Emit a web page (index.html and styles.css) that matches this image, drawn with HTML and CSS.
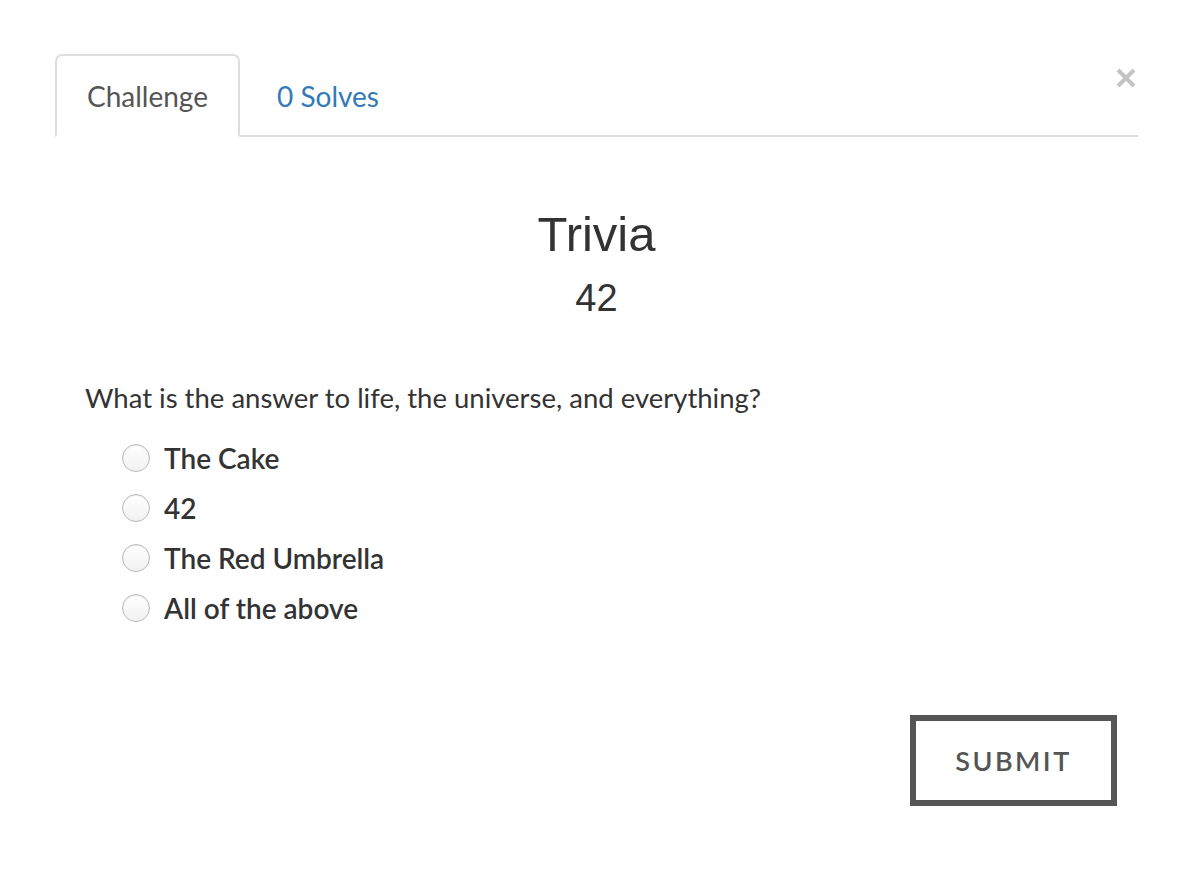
FILE: index.html
```html
<!DOCTYPE html>
<html lang="en">

<head>
    <meta charset="UTF-8">
    <meta name="viewport" content="width=device-width, initial-scale=1.0">
    <title>Trivia</title>
    <link rel="stylesheet" href="styles.css">
</head>

<body>
    <div class="modal">
        <div class="tab-bar">
            <ul class="tabs">
                <li class="tab active">Challenge</li>
                <li class="tab"><a href="#">0 Solves</a></li>
            </ul>
            <button class="close" aria-label="Close">
                <svg width="22" height="22" viewBox="0 0 22 22">
                    <path d="M2 3 L18 19 M18 3 L2 19" stroke="#c4c4c4" stroke-width="4" stroke-linecap="butt" />
                </svg>
            </button>
        </div>

        <div class="challenge">
            <h2 class="chal-name">Trivia</h2>
            <h3 class="chal-value">42</h3>

            <div class="chal-body">
                <p class="question">What is the answer to life, the universe, and everything?</p>

                <form class="answers">
                    <label class="option"><input type="radio" name="answer"> The Cake</label>
                    <label class="option"><input type="radio" name="answer"> 42</label>
                    <label class="option"><input type="radio" name="answer"> The Red Umbrella</label>
                    <label class="option"><input type="radio" name="answer"> All of the above</label>
                </form>

                <div class="actions">
                    <button class="submit-btn" type="button">Submit</button>
                </div>
            </div>
        </div>
    </div>
</body>

</html>
```

FILE: styles.css
```css
body {
    margin: 0;
    padding: 0;
    background-color: #ffffff;
    font-family: 'Lato', sans-serif;
    color: #333333;
}

.modal {
    margin: 54px 54px 0 55px;
}

.tab-bar {
    display: flex;
    align-items: flex-start;
}

.tabs {
    flex: 1;
    display: flex;
    list-style: none;
    margin: 0;
    padding: 0;
    border-bottom: 2px solid #dddddd;
}

.tab {
    font-size: 28px;
    line-height: 40px;
    padding: 20px 30px 19px 30px;
    margin-bottom: -2px;
    border: 2px solid transparent;
    border-radius: 7px 7px 0 0;
    color: #555555;
}

.tab.active {
    border-color: #dddddd;
    border-bottom-color: #ffffff;
}

.tab a {
    color: #337ab7;
    text-decoration: none;
    padding-left: 5px;
}

.close {
    border: none;
    background: none;
    padding: 0;
    margin: 13px 0 0 -22px;
    width: 22px;
    height: 22px;
    cursor: pointer;
}

.close svg {
    display: block;
}

.chal-name {
    font-family: 'Liberation Sans', Arial, sans-serif;
    font-weight: normal;
    font-size: 49px;
    line-height: 56px;
    text-align: center;
    margin: 69px 0 0 0;
    color: #333333;
}

.chal-value {
    font-family: 'Liberation Sans', Arial, sans-serif;
    font-weight: normal;
    font-size: 38px;
    line-height: 42px;
    text-align: center;
    margin: 15px 0 0 0;
    color: #333333;
}

.chal-body {
    padding: 0 21px 0 30px;
}

.question {
    font-size: 27.5px;
    line-height: 36px;
    margin: 61px 0 0 0;
    color: #333333;
}

.answers {
    margin-top: 17px;
    padding-left: 37px;
}

.option {
    display: flex;
    align-items: center;
    height: 50px;
    font-size: 28px;
    font-weight: 600;
    color: #333333;
}

.option input {
    appearance: none;
    width: 28px;
    height: 28px;
    margin: 0 14px 0 0;
    border: 1px solid #b9b9b9;
    border-radius: 50%;
    background: linear-gradient(#ffffff, #f1f1f1);
    box-shadow: inset 0 1px 1px rgba(0, 0, 0, 0.08);
}

.actions {
    display: flex;
    justify-content: flex-end;
    margin-top: 82px;
}

.submit-btn {
    box-sizing: border-box;
    width: 207px;
    height: 91px;
    border: 6px solid #555555;
    background-color: #ffffff;
    color: #555555;
    font-family: 'Lato', sans-serif;
    font-size: 27px;
    font-weight: 600;
    letter-spacing: 2.5px;
    text-transform: uppercase;
    cursor: pointer;
}
```
